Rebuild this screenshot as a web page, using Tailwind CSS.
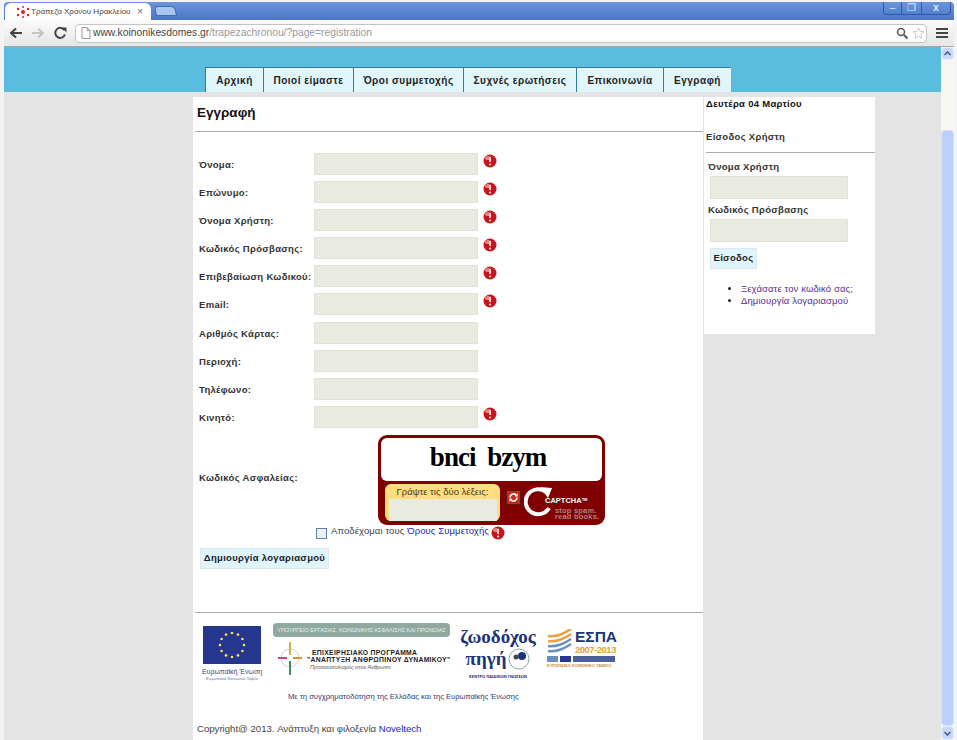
<!DOCTYPE html>
<html lang="en">
<head>
  <meta charset="UTF-8" />
  <title>Τράπεζα Χρόνου Ηρακλείου</title>
  <script src="https://cdn.jsdelivr.net/npm/@tailwindcss/browser@4"></script>
</head>
<body class="w-[957px] h-[740px] overflow-hidden bg-[#f4f4f4] font-['Liberation_Sans',sans-serif] text-[#333]">

  <!-- Browser title bar -->
  <div class="ml-1 mr-[3px] mt-0.5 h-[18px] flex items-end bg-gradient-to-b from-[#6b95dc] to-[#4a76c8] rounded-t-sm relative">
    <div class="ml-px w-[146px] h-[17px] bg-white rounded-t-md flex items-center pl-[11px] pr-2 text-[8px] text-[#444] whitespace-nowrap">
      <svg width="14" height="12" viewBox="0 0 14 12" class="mr-[1px] shrink-0">
        <g fill="#e0202a"><circle cx="7" cy="6" r="2"/><circle cx="2" cy="3" r="1.200"/><circle cx="12" cy="3" r="1.200"/><circle cx="2" cy="9" r="1.200"/><circle cx="12" cy="9" r="1.200"/><circle cx="7" cy="1" r="1"/><circle cx="7" cy="11" r="1"/></g>
      </svg>
      <span>Τράπεζα Χρόνου Ηρακλείου</span>
      <span class="ml-auto text-[10px] text-[#666]">×</span>
    </div>
    <div class="ml-1 mb-1 w-[21px] h-2.5 bg-[#a9c4ee] border border-[#3f68b5] rounded-t-sm skew-x-12"></div>
    <div class="absolute right-[3px] top-0 w-[68px] h-[13px] flex border border-[#2f5aa8] border-t-0 rounded-b-sm text-[#dfe9f9] text-[10px] leading-3 text-center">
      <span class="w-[18px] border-r border-[#2f5aa8]">–</span>
      <span class="w-[20px] border-r border-[#2f5aa8]">❐</span>
      <span class="flex-1 font-bold">x</span>
    </div>
  </div>

  <!-- Browser toolbar -->
  <div class="ml-1 mr-[3px] h-[27px] flex items-center bg-gradient-to-b from-[#fbfbfb] to-[#e6e6e6] border-b border-[#a8a8a8]">
    <svg width="60" height="14" viewBox="0 0 60 14" class="ml-[6px] shrink-0">
      <path d="M1 7h11M6 2.500 1 7l5 4.500" fill="none" stroke="#444" stroke-width="2.200"/>
      <path d="M22 7h11M28 2.500 33 7l-5 4.500" fill="none" stroke="#c4c4c4" stroke-width="2"/>
      <path d="M54.500 4.200A5 5 0 1 0 55 8.500" fill="none" stroke="#444" stroke-width="2"/>
      <path d="M51.500 1.500h5v5z" fill="#444"/>
    </svg>
    <div class="ml-[5px] w-[852px] h-[19px] flex items-center bg-white border border-[#c4c4c4] rounded-sm text-[10.300px] pl-[4px] shrink-0 whitespace-nowrap">
      <svg width="12" height="14" viewBox="0 0 12 14" class="mr-px"><path d="M2 1.500h5l3 3v8H2zM7 1.500v3h3" fill="white" stroke="#999"/></svg>
      <span class="text-[#444]">www.koinonikesdomes.gr</span><span class="text-[#999]">/trapezachronou/?page=registration</span>
      <svg width="40" height="16" viewBox="0 0 40 16" class="ml-auto mr-px">
        <circle cx="16" cy="7" r="3.500" fill="none" stroke="#555" stroke-width="1.500"/><path d="M19 10l3.500 3.500" stroke="#555" stroke-width="2"/>
        <path transform="translate(33.500 8) scale(.8) translate(-28 -8)" d="M28 1.500l2 4.500 4.800.500-3.600 3.200 1 4.800-4.200-2.500-4.200 2.500 1-4.800-3.600-3.200 4.800-.500z" fill="#fff" stroke="#bbb"/>
      </svg>
    </div>
    <div class="ml-[9px] w-3 flex flex-col gap-0.5">
      <div class="h-0.5 bg-[#444]"></div><div class="h-0.5 bg-[#444]"></div><div class="h-0.5 bg-[#444]"></div>
    </div>
  </div>

  <div class="ml-1 flex h-[693px]">
    <!-- Page -->
    <div class="w-[937px] shrink-0 bg-[#e4e4e4] overflow-hidden">
      <div class="h-[45px] bg-[#5abcdf] flex items-end pl-[201px]">
        <nav class="flex h-[25px] text-[10px] font-bold tracking-[0.5px] text-[#222]">
          <a class="w-[58px] flex items-center justify-center bg-[#e0f6fb] border-t border-l border-[#2f7da0]">Αρχική</a>
          <a class="w-[90px] flex items-center justify-center bg-[#e0f6fb] border-t border-l border-[#2f7da0]">Ποιοί είμαστε</a>
          <a class="w-[110px] flex items-center justify-center bg-[#e0f6fb] border-t border-l border-[#2f7da0]">Όροι συμμετοχής</a>
          <a class="w-[113px] flex items-center justify-center bg-[#e0f6fb] border-t border-l border-[#2f7da0]">Συχνές ερωτήσεις</a>
          <a class="w-[87px] flex items-center justify-center bg-[#e0f6fb] border-t border-l border-[#2f7da0]">Επικοινωνία</a>
          <a class="w-[68px] flex items-center justify-center bg-[#e0f6fb] border-t border-l border-[#2f7da0]">Εγγραφή</a>
        </nav>
      </div>

      <div class="flex ml-[189px] mt-[5px] items-start gap-px">
        <!-- Main column -->
        <main class="w-[510px] h-[643px] bg-white pl-0.5">
          <h1 class="h-[34px] flex items-center pl-0.5 pb-0.5 text-[13.500px] font-bold text-[#111]">Εγγραφή</h1>
          <div class="h-px bg-[#aaa]"></div>

          <form class="mt-[21px] pl-1 text-[9.500px] font-bold tracking-[0.3px] text-[#333]">
            <div class="h-[28.100px] flex items-start"><label class="w-[115px] pt-[5px]">Όνομα:</label><div class="w-[164px] h-[22px] bg-[#eaebe0] border border-[#e2e3d8]"></div><svg class="ml-[5px] mt-px" width="14" height="14" viewBox="0 0 14 14"><circle cx="7" cy="7" r="6.500" fill="#c8141c"/><ellipse cx="5" cy="4" rx="3" ry="2" fill="#ee8080"/><path d="M7 3v5" stroke="#fff" stroke-width="1.600"/><circle cx="7" cy="10.500" r="1" fill="#fff"/></svg></div>
            <div class="h-[28.100px] flex items-start"><label class="w-[115px] pt-[5px]">Επώνυμο:</label><div class="w-[164px] h-[22px] bg-[#eaebe0] border border-[#e2e3d8]"></div><svg class="ml-[5px] mt-px" width="14" height="14" viewBox="0 0 14 14"><circle cx="7" cy="7" r="6.500" fill="#c8141c"/><ellipse cx="5" cy="4" rx="3" ry="2" fill="#ee8080"/><path d="M7 3v5" stroke="#fff" stroke-width="1.600"/><circle cx="7" cy="10.500" r="1" fill="#fff"/></svg></div>
            <div class="h-[28.100px] flex items-start"><label class="w-[115px] pt-[5px]">Όνομα Χρήστη:</label><div class="w-[164px] h-[22px] bg-[#eaebe0] border border-[#e2e3d8]"></div><svg class="ml-[5px] mt-px" width="14" height="14" viewBox="0 0 14 14"><circle cx="7" cy="7" r="6.500" fill="#c8141c"/><ellipse cx="5" cy="4" rx="3" ry="2" fill="#ee8080"/><path d="M7 3v5" stroke="#fff" stroke-width="1.600"/><circle cx="7" cy="10.500" r="1" fill="#fff"/></svg></div>
            <div class="h-[28.100px] flex items-start"><label class="w-[115px] pt-[5px]">Κωδικός Πρόσβασης:</label><div class="w-[164px] h-[22px] bg-[#eaebe0] border border-[#e2e3d8]"></div><svg class="ml-[5px] mt-px" width="14" height="14" viewBox="0 0 14 14"><circle cx="7" cy="7" r="6.500" fill="#c8141c"/><ellipse cx="5" cy="4" rx="3" ry="2" fill="#ee8080"/><path d="M7 3v5" stroke="#fff" stroke-width="1.600"/><circle cx="7" cy="10.500" r="1" fill="#fff"/></svg></div>
            <div class="h-[28.100px] flex items-start"><label class="w-[115px] pt-[5px] whitespace-nowrap">Επιβεβαίωση Κωδικού:</label><div class="w-[164px] h-[22px] bg-[#eaebe0] border border-[#e2e3d8]"></div><svg class="ml-[5px] mt-px" width="14" height="14" viewBox="0 0 14 14"><circle cx="7" cy="7" r="6.500" fill="#c8141c"/><ellipse cx="5" cy="4" rx="3" ry="2" fill="#ee8080"/><path d="M7 3v5" stroke="#fff" stroke-width="1.600"/><circle cx="7" cy="10.500" r="1" fill="#fff"/></svg></div>
            <div class="h-[28.100px] flex items-start"><label class="w-[115px] pt-[5px]">Email:</label><div class="w-[164px] h-[22px] bg-[#eaebe0] border border-[#e2e3d8]"></div><svg class="ml-[5px] mt-px" width="14" height="14" viewBox="0 0 14 14"><circle cx="7" cy="7" r="6.500" fill="#c8141c"/><ellipse cx="5" cy="4" rx="3" ry="2" fill="#ee8080"/><path d="M7 3v5" stroke="#fff" stroke-width="1.600"/><circle cx="7" cy="10.500" r="1" fill="#fff"/></svg></div>
            <div class="h-[28.100px] flex items-start"><label class="w-[115px] pt-[5px]">Αριθμός Κάρτας:</label><div class="w-[164px] h-[22px] bg-[#eaebe0] border border-[#e2e3d8]"></div></div>
            <div class="h-[28.100px] flex items-start"><label class="w-[115px] pt-[5px]">Περιοχή:</label><div class="w-[164px] h-[22px] bg-[#eaebe0] border border-[#e2e3d8]"></div></div>
            <div class="h-[28.100px] flex items-start"><label class="w-[115px] pt-[5px]">Τηλέφωνο:</label><div class="w-[164px] h-[22px] bg-[#eaebe0] border border-[#e2e3d8]"></div></div>
            <div class="h-[28.100px] flex items-start"><label class="w-[115px] pt-[5px]">Κινητό:</label><div class="w-[164px] h-[22px] bg-[#eaebe0] border border-[#e2e3d8]"></div><svg class="ml-[5px] mt-px" width="14" height="14" viewBox="0 0 14 14"><circle cx="7" cy="7" r="6.500" fill="#c8141c"/><ellipse cx="5" cy="4" rx="3" ry="2" fill="#ee8080"/><path d="M7 3v5" stroke="#fff" stroke-width="1.600"/><circle cx="7" cy="10.500" r="1" fill="#fff"/></svg></div>

            <!-- Captcha -->
            <div class="flex items-center h-[90px] mt-px">
              <label class="w-[179px] pb-[3px]">Κωδικός Ασφαλείας:</label>
              <div class="w-[227px] h-[90px] bg-[#800000] rounded-[9px] p-[3px] tracking-normal font-normal">
                <div class="h-[43px] bg-white rounded-md flex items-center justify-center font-['Liberation_Serif',serif] font-bold text-[27px] text-black tracking-[-1px] pb-1 pr-[7px] [word-spacing:6px]">bnci bzym</div>
                <div class="flex mt-[3px] pl-1">
                  <div class="w-[115px] h-[37px] bg-[#fedd7f] rounded-md pt-0.5 px-[3px] flex flex-col items-center text-[9.500px] leading-3 text-[#4a3a20]">
                    <span>Γράψτε τις δύο λέξεις:</span>
                    <div class="mt-px w-[108px] flex-1 bg-[#eaebe0]"></div>
                  </div>
                  <div class="ml-[6px] mt-1.5 w-[15px] h-[15px] bg-[#c8281e] border border-[#5a1a14] flex items-center justify-center shrink-0">
                    <svg width="11" height="11" viewBox="0 0 11 11"><path d="M2 5.500A3.500 3.500 0 0 1 8 3M9 5.500A3.500 3.500 0 0 1 3 8" fill="none" stroke="#fff" stroke-width="1.600"/><path d="M6.500 4.500h3.200V1.300zM4.500 6.500H1.300v3.200z" fill="#fff"/></svg>
                  </div>
                  <div class="ml-[3px] w-[76px] h-[33px] relative text-white whitespace-nowrap">
                    <svg width="30" height="32" viewBox="0 0 30 32" class="absolute left-0 top-[2px]"><path d="M22 6A12.500 12.500 0 1 0 25 22" fill="none" stroke="#fff" stroke-width="4"/><path d="M16 1l12 1-4 10z" fill="#fff"/></svg>
                    <span class="absolute left-[21px] top-[12px] text-[7.500px] leading-[10px] font-bold">CAPTCHA<sup class="text-[4px]">TM</sup></span>
                    <span class="absolute left-[31px] top-[24px] text-[7.500px] leading-[6px] font-bold tracking-[0.2px] text-[#b08080]">stop spam.<br>read books.</span>
                  </div>
                </div>
              </div>
            </div>

            <div class="flex items-start ml-[117px] mt-0.5 h-[21px] font-normal tracking-[0.1px] text-[9.500px] text-[#444]">
              <span class="mt-[1px] w-[11px] h-[11px] bg-[#f0f0f0] border border-[#5b7fa5]"></span>
              <span class="ml-[4px] -mt-[2px] leading-[12px]">Αποδέχομαι τους <a class="text-[#2222cc]">Όρους Συμμετοχής</a></span>
              <svg class="ml-[2px] -mt-px" width="14" height="14" viewBox="0 0 14 14"><circle cx="7" cy="7" r="6.500" fill="#c8141c"/><ellipse cx="5" cy="4" rx="3" ry="2" fill="#ee8080"/><path d="M7 3v5" stroke="#fff" stroke-width="1.600"/><circle cx="7" cy="10.500" r="1" fill="#fff"/></svg>
            </div>
            <button type="button" class="block ml-px w-[129px] h-[21px] bg-[#e0f5fb] border border-[#dde8ea] text-[9.500px] font-bold tracking-[0.3px] text-[#222] whitespace-nowrap">Δημιουργία λογαριασμού</button>
          </form>

          <div class="mt-[43px] h-px bg-[#aaa]"></div>

          <!-- Sponsor logos -->
          <div class="relative h-[90px]">
            <div class="absolute left-2 top-[13px] w-[58px] flex flex-col items-center">
              <svg width="58" height="38" viewBox="0 0 58 38" class="block">
                <rect width="58" height="38" fill="#24368e"/>
                <g fill="#ffe14d"><circle cx="29" cy="7" r="1.300"/><circle cx="35" cy="8.600" r="1.300"/><circle cx="39.400" cy="13" r="1.300"/><circle cx="41" cy="19" r="1.300"/><circle cx="39.400" cy="25" r="1.300"/><circle cx="35" cy="29.400" r="1.300"/><circle cx="29" cy="31" r="1.300"/><circle cx="23" cy="29.400" r="1.300"/><circle cx="18.600" cy="25" r="1.300"/><circle cx="17" cy="19" r="1.300"/><circle cx="18.600" cy="13" r="1.300"/><circle cx="23" cy="8.600" r="1.300"/></g>
              </svg>
              <span class="mt-[3px] text-[7px] leading-[9px] text-[#2b4a8c] whitespace-nowrap">Ευρωπαϊκή Ένωση</span>
              <span class="text-[4px] leading-[6px] text-[#5a7ab0] whitespace-nowrap">Ευρωπαϊκό Κοινωνικό Ταμείο</span>
            </div>
            <div class="absolute left-[78px] top-[10px] w-[177px]">
              <div class="h-[14px] bg-[#8fa9a0] rounded-sm text-[5.500px] leading-[14px] text-center text-[#e8f0ec] whitespace-nowrap">ΥΠΟΥΡΓΕΙΟ ΕΡΓΑΣΙΑΣ, ΚΟΙΝΩΝΙΚΗΣ ΑΣΦΑΛΙΣΗΣ ΚΑΙ ΠΡΟΝΟΙΑΣ</div>
              <div class="flex mt-[2px]">
                <svg width="34" height="38" viewBox="0 0 34 38" class="shrink-0">
                  <circle cx="17" cy="19" r="9" fill="none" stroke="#c8d4cc"/>
                  <path d="M17 3v13" stroke="#d8b048" stroke-width="2"/><path d="M17 22v14" stroke="#3a9060" stroke-width="2"/><path d="M5 19h9" stroke="#d04880" stroke-width="2"/><path d="M20 19h9" stroke="#e09030" stroke-width="2"/>
                </svg>
                <div class="pt-[10px] whitespace-nowrap">
                  <div class="text-[6.800px] leading-[7px] font-bold text-[#222] tracking-[0.3px] pl-[5px]">ΕΠΙΧΕΙΡΗΣΙΑΚΟ ΠΡΟΓΡΑΜΜΑ</div>
                  <div class="text-[6.800px] leading-[7px] font-bold text-[#222] tracking-[0.3px]">"ΑΝΑΠΤΥΞΗ ΑΝΘΡΩΠΙΝΟΥ ΔΥΝΑΜΙΚΟΥ"</div>
                  <div class="text-[5.500px] leading-[9px] italic text-[#555] pl-[3px]">Προσανατολισμός στον Άνθρωπο</div>
                </div>
              </div>
            </div>
            <div class="absolute left-[264px] top-[14px] w-[78px] flex flex-col items-center font-['Liberation_Serif',serif] text-[#1c3478] font-bold">
              <span class="text-[19px] leading-[20px] whitespace-nowrap">ζωοδόχος</span>
              <div class="flex items-center">
                <span class="text-[19px] leading-[20px]">πηγή</span>
                <svg width="22" height="24" viewBox="0 0 22 24" class="ml-0.5"><circle cx="11" cy="12" r="10" fill="none" stroke="#8aa" stroke-width="1"/><circle cx="14" cy="9" r="4" fill="#1c3478"/><circle cx="8" cy="10" r="2.500" fill="#445"/></svg>
              </div>
              <span class="mt-[3px] text-[4px] leading-[5px] font-sans whitespace-nowrap">ΚΕΝΤΡΟ ΠΑΙΔΙΚΩΝ ΓΝΩΣΕΩΝ</span>
            </div>
            <div class="absolute left-[352px] top-[16px] w-[68px]">
              <div class="flex items-start">
                <svg width="25" height="24" viewBox="0 0 25 24" class="shrink-0"><path d="M1 7C10 8 16 5 24 0M1 12C10 13 16 10 24 5" fill="none" stroke="#e8a040" stroke-width="2.500"/><path d="M1 17C10 18 16 15 24 10M1 22C10 23 16 20 24 15" fill="none" stroke="#6a90c0" stroke-width="2.500"/></svg>
                <div class="ml-[3px]">
                  <div class="text-[15.500px] leading-[15px] font-bold text-[#1c3478]">ΕΣΠΑ</div>
                  <div class="text-[9.500px] leading-[11px] font-bold text-[#e8a040] tracking-[-0.5px]">2007-2013</div>
                </div>
              </div>
              <div class="mt-px h-1.5 flex gap-0.5"><div class="w-[11px] bg-[#6a90c0]"></div><div class="w-[11px] bg-[#24368e]"></div><div class="flex-1 bg-[#4a6098]"></div></div>
              <div class="mt-px text-[4px] leading-[6px] font-bold text-[#d09040] whitespace-nowrap">ΕΥΡΩΠΑΙΚΟ ΚΟΙΝΩΝΙΚΟ ΤΑΜΕΙΟ</div>
            </div>
            <p class="absolute left-[93px] top-[79px] text-[7.600px] leading-[10px] text-[#2c3a78] whitespace-nowrap">Με τη συγχρηματοδότηση της Ελλάδας και της Ευρωπαϊκής Ένωσης</p>
          </div>
          <p class="mt-[20px] pl-0.5 text-[9.600px] leading-3 text-[#444]">Copyright@ 2013. Ανάπτυξη και φιλοξενία <a class="text-[#2222cc]">Noveltech</a></p>
        </main>

        <!-- Sidebar -->
        <aside class="w-[171px] h-[237px] bg-white text-[9.500px] tracking-[0.3px] font-bold text-[#333]">
          <p class="pt-px pl-0.5 leading-3 text-[#111]">Δευτέρα 04 Μαρτίου</p>
          <p class="pl-0.5 mt-[21px] leading-3">Είσοδος Χρήστη</p>
          <div class="mt-[9px] ml-0.5 h-px bg-[#aaa]"></div>
          <label class="block ml-1 mt-2 leading-3">Όνομα Χρήστη</label>
          <div class="ml-1.5 mt-[3px] w-[138px] h-[23px] bg-[#eaebe0] border border-[#e2e3d8]"></div>
          <label class="block ml-1 mt-[5px] leading-3">Κωδικός Πρόσβασης</label>
          <div class="ml-1.5 mt-[3px] w-[138px] h-[23px] bg-[#eaebe0] border border-[#e2e3d8]"></div>
          <button type="button" class="block ml-1.5 mt-[6px] w-[47px] h-[21px] bg-[#e0f5fb] border border-[#dde8ea] text-[#222] tracking-[0.3px] font-bold whitespace-nowrap">Είσοδος</button>
          <ul class="mt-[14px] ml-[37px] list-disc marker:text-[#222] text-[9.500px] leading-3 font-normal tracking-[0.1px] text-[#5c2d91] whitespace-nowrap">
            <li>Ξεχάσατε τον κωδικό σας;</li>
            <li>Δημιουργία λογαριασμού</li>
          </ul>
        </aside>
      </div>
    </div>

    <!-- Scrollbar -->
    <div class="w-[13px] shrink-0 flex flex-col bg-[#f7f6f0]">
      <div class="h-[13px] bg-[#c8d8f8] border border-[#e8eefb] rounded-sm flex items-center justify-center"><svg width="7" height="5" viewBox="0 0 7 5"><path d="M.5 4 3.500 1l3 3" fill="none" stroke="#3a5a90" stroke-width="1.500"/></svg></div>
      <div class="h-[70px]"></div>
      <div class="flex-1 bg-[#bcd0fb] border border-[#d8e2fb] rounded-sm"></div>
      <div class="h-[14px] bg-[#c8d8f8] border border-[#e8eefb] rounded-sm flex items-center justify-center"><svg width="7" height="5" viewBox="0 0 7 5"><path d="M.5 1l3 3 3-3" fill="none" stroke="#3a5a90" stroke-width="1.500"/></svg></div>
    </div>
  </div>
</body>
</html>
